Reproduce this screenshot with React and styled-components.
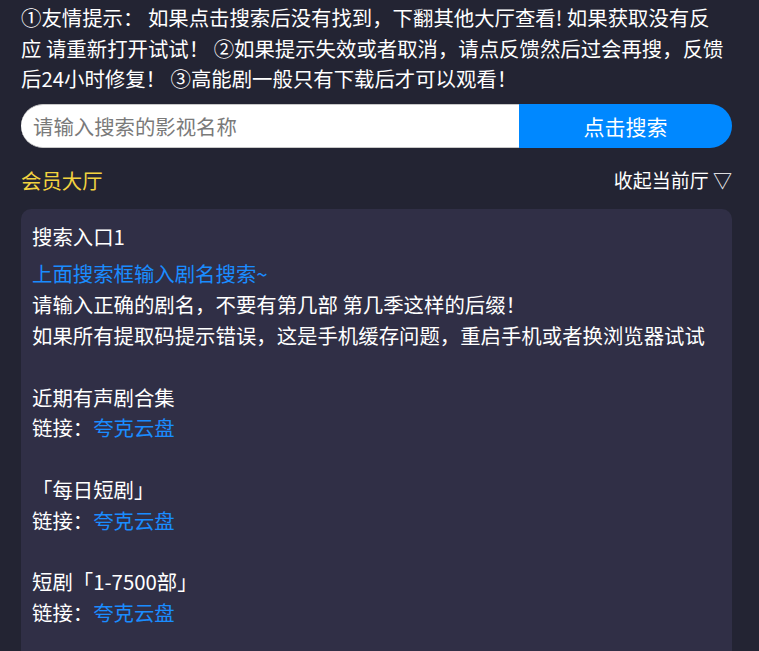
import React from "react";
import styled, { createGlobalStyle } from "styled-components";

const Global = createGlobalStyle`
  html, body {
    margin: 0;
    padding: 0;
    background: #232433;
  }
  body {
    font-family: "Noto Sans CJK SC", "Noto Sans", sans-serif;
    color: #ffffff;
  }
  * { box-sizing: border-box; }
`;

const Page = styled.div`
  padding: 2px 27px 0 21px;
  min-height: 651px;
`;

const Notice = styled.p`
  margin: 0 4px 0 0;
  font-size: 20.4px;
  line-height: 30.6px;
  color: #ffffff;
`;

const SearchBar = styled.form`
  display: flex;
  margin-top: 10px;
  height: 44px;
`;

const SearchInput = styled.input`
  flex: 1;
  min-width: 0;
  height: 100%;
  border: none;
  border-top: 1px solid #c8c8c8;
  border-bottom: 1px solid #c8c8c8;
  border-radius: 22px 0 0 22px;
  background: #ffffff;
  padding: 0 12px;
  font-family: inherit;
  font-size: 20.4px;
  color: #333;
  outline: none;
  &::placeholder {
    color: #7a7a7a;
  }
`;

const SearchButton = styled.button`
  width: 213px;
  height: 100%;
  border: none;
  border-radius: 0 22px 22px 0;
  background: #0088ff;
  color: #ffffff;
  font-family: inherit;
  font-size: 21px;
  cursor: pointer;
`;

const HallHeader = styled.div`
  display: flex;
  justify-content: space-between;
  align-items: center;
  margin-top: 17px;
  height: 30px;
`;

const HallTitle = styled.span`
  font-size: 20.4px;
  color: #f3d33f;
`;

const Collapse = styled.span`
  font-size: 19px;
  color: #ffffff;
`;

const Card = styled.div`
  margin-top: 14px;
  background: #302f46;
  border-radius: 10px;
  padding: 12px 11px 60px;
`;

const CardTitle = styled.div`
  font-size: 20.4px;
  line-height: 30.6px;
  margin-bottom: 7px;
`;

const Line = styled.div`
  font-size: 20.4px;
  line-height: 30.8px;
  min-height: 30.8px;
  color: ${(p) => (p.$accent ? "#1a8cff" : "#ffffff")};
`;

const Link = styled.a`
  color: #1a8cff;
  text-decoration: none;
`;

const entries = ["近期有声剧合集", "「每日短剧」", "短剧「1-7500部」"];

export default function App() {
  return (
    <>
      <Global />
      <Page>
        <Notice>
          ①友情提示： 如果点击搜索后没有找到，下翻其他大厅查看! 如果获取没有反应 请重新打开试试！ ②如果提示失效或者取消，请点反馈然后过会再搜，反馈后24小时修复！ ③高能剧一般只有下载后才可以观看！
        </Notice>
        <SearchBar onSubmit={(e) => e.preventDefault()}>
          <SearchInput placeholder="请输入搜索的影视名称" />
          <SearchButton type="submit">点击搜索</SearchButton>
        </SearchBar>
        <HallHeader>
          <HallTitle>会员大厅</HallTitle>
          <Collapse>收起当前厅 ▽</Collapse>
        </HallHeader>
        <Card>
          <CardTitle>搜索入口1</CardTitle>
          <Line $accent>上面搜索框输入剧名搜索~</Line>
          <Line>请输入正确的剧名，不要有第几部 第几季这样的后缀！</Line>
          <Line>如果所有提取码提示错误，这是手机缓存问题，重启手机或者换浏览器试试</Line>
          {entries.map((name) => (
            <React.Fragment key={name}>
              <Line />
              <Line>{name}</Line>
              <Line>
                链接：<Link href="#">夸克云盘</Link>
              </Line>
            </React.Fragment>
          ))}
        </Card>
      </Page>
    </>
  );
}
